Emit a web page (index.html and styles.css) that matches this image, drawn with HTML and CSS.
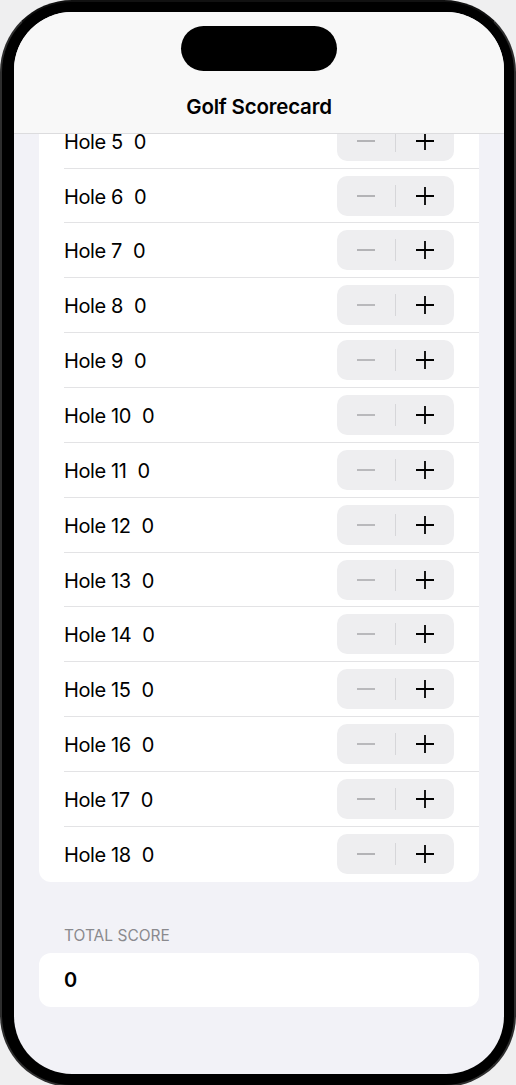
FILE: index.html
```html
<!DOCTYPE html>
<html>
<head>
<meta charset="utf-8">
<link rel="stylesheet" href="styles.css">
</head>
<body>
<div class="phone">
  <div class="screen">
    <header class="nav">
      <div class="island"></div>
      <h1 class="title">Golf Scorecard</h1>
    </header>
    <main class="scroll">
      <div class="content">
        <section class="card list">
          <div class="row"><span class="hole">Hole 1</span><span class="score">0</span><div class="stepper"><span class="btn minus"><svg width="20" height="20" viewBox="0 0 20 20"><path d="M1 10H19" stroke="#b3b3b6" stroke-width="1.8"/></svg></span><span class="div"></span><span class="btn plus"><svg width="20" height="20" viewBox="0 0 20 20"><path d="M1 10H19M10 1V19" stroke="#000" stroke-width="1.8"/></svg></span></div></div>
          <div class="row"><span class="hole">Hole 2</span><span class="score">0</span><div class="stepper"><span class="btn minus"><svg width="20" height="20" viewBox="0 0 20 20"><path d="M1 10H19" stroke="#b3b3b6" stroke-width="1.8"/></svg></span><span class="div"></span><span class="btn plus"><svg width="20" height="20" viewBox="0 0 20 20"><path d="M1 10H19M10 1V19" stroke="#000" stroke-width="1.8"/></svg></span></div></div>
          <div class="row"><span class="hole">Hole 3</span><span class="score">0</span><div class="stepper"><span class="btn minus"><svg width="20" height="20" viewBox="0 0 20 20"><path d="M1 10H19" stroke="#b3b3b6" stroke-width="1.8"/></svg></span><span class="div"></span><span class="btn plus"><svg width="20" height="20" viewBox="0 0 20 20"><path d="M1 10H19M10 1V19" stroke="#000" stroke-width="1.8"/></svg></span></div></div>
          <div class="row"><span class="hole">Hole 4</span><span class="score">0</span><div class="stepper"><span class="btn minus"><svg width="20" height="20" viewBox="0 0 20 20"><path d="M1 10H19" stroke="#b3b3b6" stroke-width="1.8"/></svg></span><span class="div"></span><span class="btn plus"><svg width="20" height="20" viewBox="0 0 20 20"><path d="M1 10H19M10 1V19" stroke="#000" stroke-width="1.8"/></svg></span></div></div>
          <div class="row"><span class="hole">Hole 5</span><span class="score">0</span><div class="stepper"><span class="btn minus"><svg width="20" height="20" viewBox="0 0 20 20"><path d="M1 10H19" stroke="#b3b3b6" stroke-width="1.8"/></svg></span><span class="div"></span><span class="btn plus"><svg width="20" height="20" viewBox="0 0 20 20"><path d="M1 10H19M10 1V19" stroke="#000" stroke-width="1.8"/></svg></span></div></div>
          <div class="row"><span class="hole">Hole 6</span><span class="score">0</span><div class="stepper"><span class="btn minus"><svg width="20" height="20" viewBox="0 0 20 20"><path d="M1 10H19" stroke="#b3b3b6" stroke-width="1.8"/></svg></span><span class="div"></span><span class="btn plus"><svg width="20" height="20" viewBox="0 0 20 20"><path d="M1 10H19M10 1V19" stroke="#000" stroke-width="1.8"/></svg></span></div></div>
          <div class="row"><span class="hole">Hole 7</span><span class="score">0</span><div class="stepper"><span class="btn minus"><svg width="20" height="20" viewBox="0 0 20 20"><path d="M1 10H19" stroke="#b3b3b6" stroke-width="1.8"/></svg></span><span class="div"></span><span class="btn plus"><svg width="20" height="20" viewBox="0 0 20 20"><path d="M1 10H19M10 1V19" stroke="#000" stroke-width="1.8"/></svg></span></div></div>
          <div class="row"><span class="hole">Hole 8</span><span class="score">0</span><div class="stepper"><span class="btn minus"><svg width="20" height="20" viewBox="0 0 20 20"><path d="M1 10H19" stroke="#b3b3b6" stroke-width="1.8"/></svg></span><span class="div"></span><span class="btn plus"><svg width="20" height="20" viewBox="0 0 20 20"><path d="M1 10H19M10 1V19" stroke="#000" stroke-width="1.8"/></svg></span></div></div>
          <div class="row"><span class="hole">Hole 9</span><span class="score">0</span><div class="stepper"><span class="btn minus"><svg width="20" height="20" viewBox="0 0 20 20"><path d="M1 10H19" stroke="#b3b3b6" stroke-width="1.8"/></svg></span><span class="div"></span><span class="btn plus"><svg width="20" height="20" viewBox="0 0 20 20"><path d="M1 10H19M10 1V19" stroke="#000" stroke-width="1.8"/></svg></span></div></div>
          <div class="row"><span class="hole">Hole 10</span><span class="score">0</span><div class="stepper"><span class="btn minus"><svg width="20" height="20" viewBox="0 0 20 20"><path d="M1 10H19" stroke="#b3b3b6" stroke-width="1.8"/></svg></span><span class="div"></span><span class="btn plus"><svg width="20" height="20" viewBox="0 0 20 20"><path d="M1 10H19M10 1V19" stroke="#000" stroke-width="1.8"/></svg></span></div></div>
          <div class="row"><span class="hole">Hole 11</span><span class="score">0</span><div class="stepper"><span class="btn minus"><svg width="20" height="20" viewBox="0 0 20 20"><path d="M1 10H19" stroke="#b3b3b6" stroke-width="1.8"/></svg></span><span class="div"></span><span class="btn plus"><svg width="20" height="20" viewBox="0 0 20 20"><path d="M1 10H19M10 1V19" stroke="#000" stroke-width="1.8"/></svg></span></div></div>
          <div class="row"><span class="hole">Hole 12</span><span class="score">0</span><div class="stepper"><span class="btn minus"><svg width="20" height="20" viewBox="0 0 20 20"><path d="M1 10H19" stroke="#b3b3b6" stroke-width="1.8"/></svg></span><span class="div"></span><span class="btn plus"><svg width="20" height="20" viewBox="0 0 20 20"><path d="M1 10H19M10 1V19" stroke="#000" stroke-width="1.8"/></svg></span></div></div>
          <div class="row"><span class="hole">Hole 13</span><span class="score">0</span><div class="stepper"><span class="btn minus"><svg width="20" height="20" viewBox="0 0 20 20"><path d="M1 10H19" stroke="#b3b3b6" stroke-width="1.8"/></svg></span><span class="div"></span><span class="btn plus"><svg width="20" height="20" viewBox="0 0 20 20"><path d="M1 10H19M10 1V19" stroke="#000" stroke-width="1.8"/></svg></span></div></div>
          <div class="row"><span class="hole">Hole 14</span><span class="score">0</span><div class="stepper"><span class="btn minus"><svg width="20" height="20" viewBox="0 0 20 20"><path d="M1 10H19" stroke="#b3b3b6" stroke-width="1.8"/></svg></span><span class="div"></span><span class="btn plus"><svg width="20" height="20" viewBox="0 0 20 20"><path d="M1 10H19M10 1V19" stroke="#000" stroke-width="1.8"/></svg></span></div></div>
          <div class="row"><span class="hole">Hole 15</span><span class="score">0</span><div class="stepper"><span class="btn minus"><svg width="20" height="20" viewBox="0 0 20 20"><path d="M1 10H19" stroke="#b3b3b6" stroke-width="1.8"/></svg></span><span class="div"></span><span class="btn plus"><svg width="20" height="20" viewBox="0 0 20 20"><path d="M1 10H19M10 1V19" stroke="#000" stroke-width="1.8"/></svg></span></div></div>
          <div class="row"><span class="hole">Hole 16</span><span class="score">0</span><div class="stepper"><span class="btn minus"><svg width="20" height="20" viewBox="0 0 20 20"><path d="M1 10H19" stroke="#b3b3b6" stroke-width="1.8"/></svg></span><span class="div"></span><span class="btn plus"><svg width="20" height="20" viewBox="0 0 20 20"><path d="M1 10H19M10 1V19" stroke="#000" stroke-width="1.8"/></svg></span></div></div>
          <div class="row"><span class="hole">Hole 17</span><span class="score">0</span><div class="stepper"><span class="btn minus"><svg width="20" height="20" viewBox="0 0 20 20"><path d="M1 10H19" stroke="#b3b3b6" stroke-width="1.8"/></svg></span><span class="div"></span><span class="btn plus"><svg width="20" height="20" viewBox="0 0 20 20"><path d="M1 10H19M10 1V19" stroke="#000" stroke-width="1.8"/></svg></span></div></div>
          <div class="row"><span class="hole">Hole 18</span><span class="score">0</span><div class="stepper"><span class="btn minus"><svg width="20" height="20" viewBox="0 0 20 20"><path d="M1 10H19" stroke="#b3b3b6" stroke-width="1.8"/></svg></span><span class="div"></span><span class="btn plus"><svg width="20" height="20" viewBox="0 0 20 20"><path d="M1 10H19M10 1V19" stroke="#000" stroke-width="1.8"/></svg></span></div></div>
        </section>
        <h2 class="section-header">TOTAL SCORE</h2>
        <section class="card total">
          <span class="total-value">0</span>
        </section>
      </div>
    </main>
  </div>
</div>
</body>
</html>
```
FILE: styles.css
```css
html, body {
  margin: 0;
  padding: 0;
}
body {
  width: 516px;
  height: 1085px;
  overflow: hidden;
  background: #efeff0;
  font-family: Inter, "Noto Sans", "Liberation Sans", sans-serif;
  color: #000;
}
.phone {
  box-sizing: border-box;
  width: 516px;
  height: 1087px;
  border: 2px solid #2e2e2e;
  border-top-color: #111;
  border-radius: 72px;
  background: #000;
  padding: 10px 10px 11px 12px;
}
.screen {
  display: flex;
  flex-direction: column;
  height: 1062px;
  background: #f2f2f7;
  border-radius: 58px;
  overflow: hidden;
}
.nav {
  flex: none;
  height: 121px;
  background: #f8f8f8;
  border-bottom: 1px solid #dcdcde;
  display: flex;
  flex-direction: column;
  align-items: center;
}
.island {
  margin-top: 14px;
  width: 156px;
  height: 45px;
  border-radius: 23px;
  background: #000;
}
.title {
  margin: 23px 0 0;
  font-size: 20.5px;
  line-height: 25px;
  font-weight: 600;
  letter-spacing: -0.2px;
}
.scroll {
  flex: 1;
  overflow: hidden;
}
.content {
  margin-top: -239.7px;
  padding: 0 25px;
}
.card {
  background: #fff;
  border-radius: 12px;
}
.row {
  box-sizing: border-box;
  height: 54.87px;
  margin-left: 25px;
  padding-right: 25px;
  border-bottom: 1px solid #e3e3e5;
  display: flex;
  align-items: center;
  font-size: 20px;
  letter-spacing: -0.4px;
}
.row:last-child {
  border-bottom: none;
}
.hole {
  margin-right: 11px;
  padding-top: 2px;
}
.score {
  flex: 1;
  padding-top: 2px;
}
.stepper {
  width: 117px;
  height: 40px;
  border-radius: 10px;
  background: #eeeef0;
  display: flex;
  align-items: center;
}
.btn {
  flex: 1;
  display: flex;
  justify-content: center;
  align-items: center;
}
.btn svg {
  display: block;
}
.div {
  width: 1px;
  height: 22px;
  background: #d6d6d9;
}
.section-header {
  margin: 44px 0 7px 25px;
  font-size: 15.5px;
  line-height: 20px;
  font-weight: 400;
  color: #8a8a8e;
  letter-spacing: 0;
}
.total {
  height: 54px;
  display: flex;
  align-items: center;
  padding-left: 25px;
}
.total-value {
  font-size: 20px;
  font-weight: 600;
  padding-top: 1px;
}
```
